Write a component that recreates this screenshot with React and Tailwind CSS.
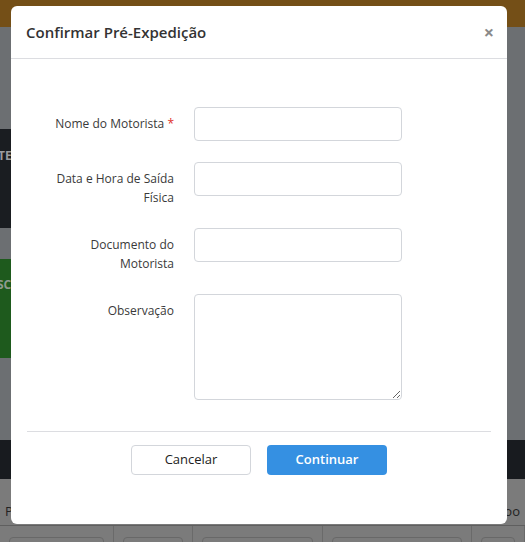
import React from 'react';

const font = { fontFamily: '"Open Sans", "Noto Sans", sans-serif' };

function Field({ label, required, children }) {
  return (
    <div className="flex items-start mb-[21px]">
      <label className="ml-[26px] w-[121px] shrink-0 pt-[7px] text-right text-[12px] leading-[19px] text-[#3a3a3a]">
        {label}
        {required && <span className="text-[#e0302a]"> *</span>}
      </label>
      <div className="ml-[20px] w-[208px]">{children}</div>
    </div>
  );
}

function Backdrop() {
  const cols = ['w-[114px]', 'w-[79px]', 'w-[130px]', 'w-[149px]', 'flex-1'];
  return (
    <div className="flex flex-col h-[542px] bg-[#6c6f72]">
      <div className="h-[27px] shrink-0 bg-[#744f17]" />
      <div className="h-[102px] shrink-0" />
      <div className="h-[99px] shrink-0 w-[60px] bg-[#1a1d21] flex items-start pt-[18px]">
        <span className="text-[12px] font-bold text-[#9a9ca0] -ml-[2px]">TE</span>
      </div>
      <div className="h-[31px] shrink-0" />
      <div className="h-[99px] shrink-0 w-[60px] bg-[#1e5a1d] flex items-start pt-[17px]">
        <span className="text-[12px] font-bold text-[#8f9a8f] -ml-[3px]">SC</span>
      </div>
      <div className="h-[82px] shrink-0" />
      <div className="h-[39px] shrink-0 bg-[#181b1f]" />
      <div className="flex-1 min-h-0 bg-[#7b7b7b] flex flex-col">
        <div className="h-[46px] shrink-0 flex items-end justify-between px-[5px] pb-[4px] text-[13px] text-[#222]">
          <span>P</span>
          <span>oo</span>
        </div>
        <div className="h-[40px] shrink-0 flex border-t border-[#5f5f5f]">
          {cols.map((c, i) => (
            <div key={i} className={`${c} border-r border-[#6a6a6a] px-[9px] pt-[11px]`}>
              <div className="h-[20px] rounded-[4px] border border-[#686868]" />
            </div>
          ))}
        </div>
      </div>
    </div>
  );
}

export default function App() {
  return (
    <div className="relative w-[525px] h-[542px] overflow-hidden" style={font}>
      <Backdrop />

      <div className="absolute left-[11px] top-[6px] w-[496px] h-[518px] bg-white rounded-[6px] flex flex-col">
        <div className="flex items-center justify-between h-[53px] pl-[15px] pr-[13px] border-b border-[#dcdde1]">
          <h4 className="text-[15px] font-semibold text-[#333]">Confirmar Pré-Expedição</h4>
          <button className="text-[18px] font-bold text-[#8a8a8a] leading-none">×</button>
        </div>

        <div className="px-[16px] pt-[48px]">
          <Field label="Nome do Motorista" required>
            <input className="w-full h-[34px] rounded-[4px] border border-[#d3d6db] outline-none" />
          </Field>
          <Field label="Data e Hora de Saída Física">
            <input className="w-full h-[34px] rounded-[4px] border border-[#d3d6db] outline-none" />
          </Field>
          <Field label="Documento do Motorista">
            <input className="w-full h-[34px] rounded-[4px] border border-[#d3d6db] outline-none" />
          </Field>
          <Field label="Observação">
            <textarea className="block w-full h-[106px] rounded-[4px] border border-[#d3d6db] outline-none" />
          </Field>
        </div>

        <div className="mx-[16px] mt-[10px] border-t border-[#dcdde1] pt-[13px] flex justify-center gap-[16px]">
          <button className="w-[120px] h-[30px] rounded-[4px] border border-[#d3d6db] bg-white text-[13px] text-[#222]">
            Cancelar
          </button>
          <button className="w-[120px] h-[30px] rounded-[4px] bg-[#3590e2] text-[13px] font-semibold text-white">
            Continuar
          </button>
        </div>
      </div>
    </div>
  );
}
